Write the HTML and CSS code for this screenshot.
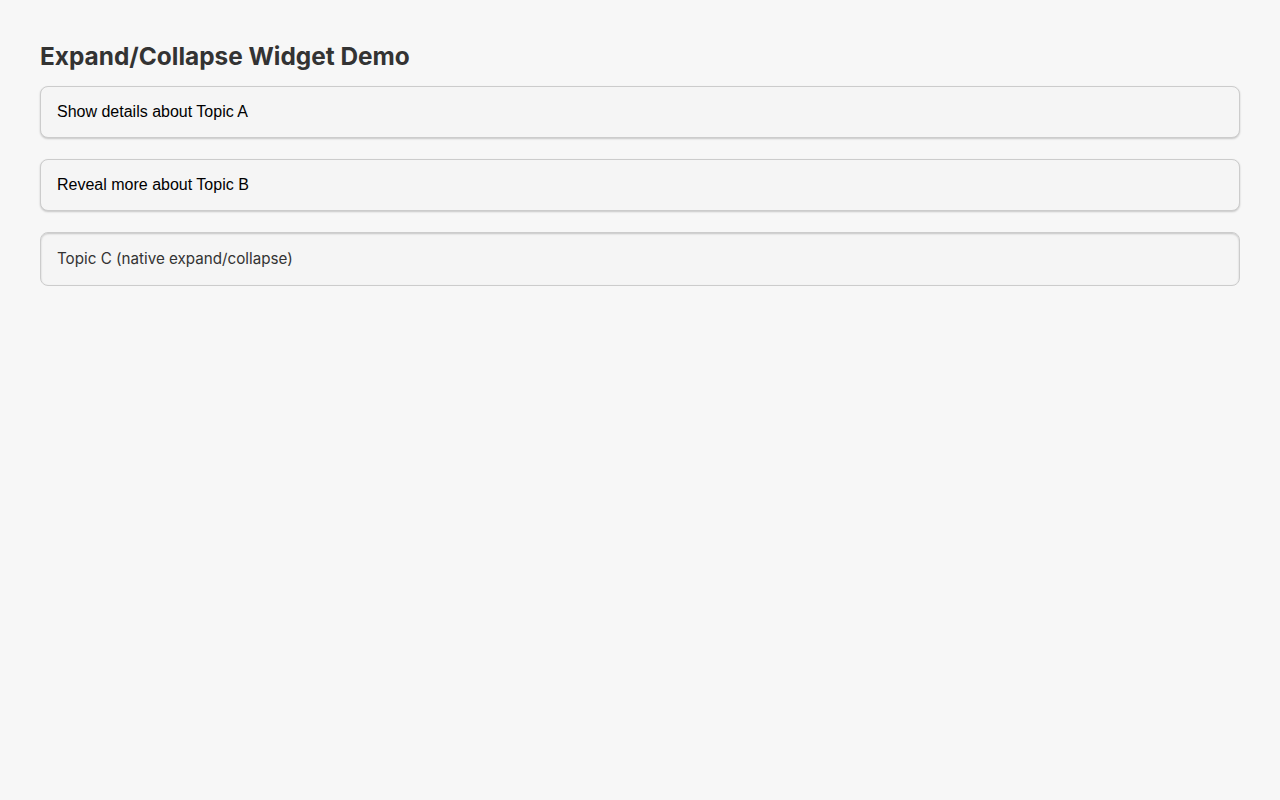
FILE: index.html
```html
<!DOCTYPE html>
<html>
<head>
<meta charset="utf-8">
<link rel="stylesheet" href="styles.css">
</head>
<body>
<main class="page">
  <h1 class="title">Expand/Collapse Widget Demo</h1>
  <div class="stack">
    <button class="toggle" type="button">Show details about Topic A</button>
    <button class="toggle" type="button">Reveal more about Topic B</button>
    <details class="native">
      <summary class="native-summary">Topic C (native expand/collapse)</summary>
    </details>
  </div>
</main>
</body>
</html>
```
FILE: styles.css
```css
html, body {
  margin: 0;
  padding: 0;
  background: #f7f7f7;
}
body {
  font-family: Inter, "Noto Sans", sans-serif;
  color: #333;
}
.page {
  padding: 40px;
}
.title {
  margin: 0 0 14px;
  font-size: 24.4px;
  font-weight: 700;
  line-height: 32px;
  color: #333;
}
.stack {
  display: flex;
  flex-direction: column;
  gap: 21px;
}
.toggle {
  display: block;
  width: 100%;
  text-align: left;
  margin: 0;
  padding: 16px;
  font-family: "Liberation Sans", Arial, sans-serif;
  font-size: 16px;
  line-height: 18px;
  color: #000;
  background: #f5f5f5;
  border: 1px solid #ccc;
  border-radius: 8px;
  box-shadow: 0 1px 2px rgba(0,0,0,0.2);
}
.native {
  background: #f5f5f5;
  border: 1px solid #ccc;
  border-radius: 8px;
  box-shadow: inset 0 1px 2px rgba(0,0,0,0.2);
}
.native-summary {
  display: block;
  list-style: none;
  padding: 16px;
  font-size: 15.2px;
  line-height: 20px;
  color: #333;
}
.native-summary::-webkit-details-marker {
  display: none;
}
```
